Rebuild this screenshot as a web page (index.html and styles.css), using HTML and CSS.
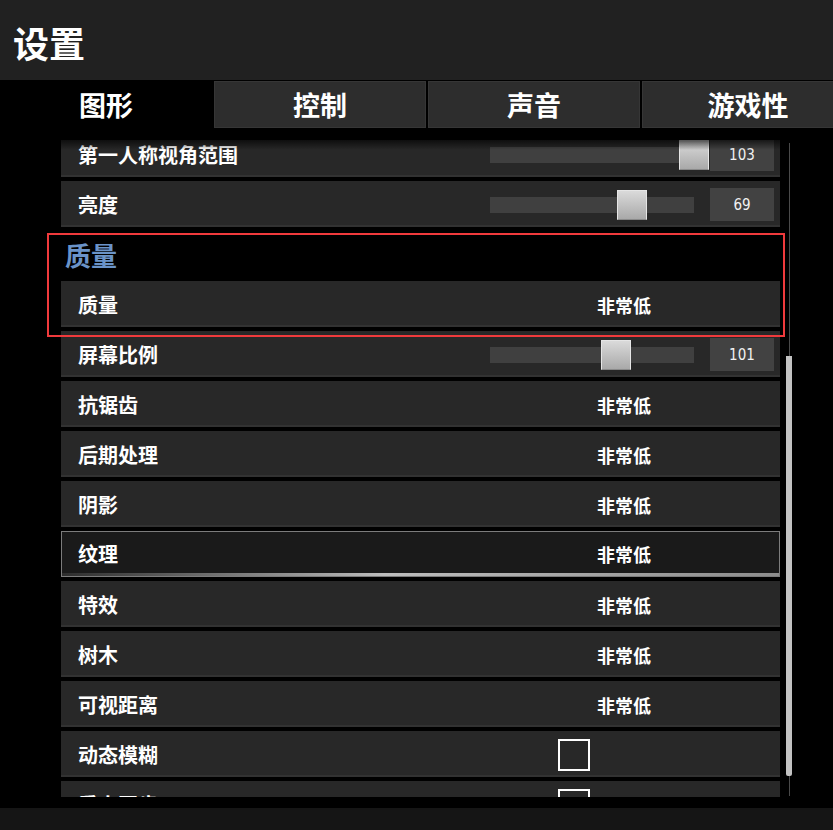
FILE: index.html
```html
<!DOCTYPE html>
<html lang="zh-CN">
<head>
<meta charset="utf-8">
<title>设置</title>
<link rel="stylesheet" href="styles.css">
</head>
<body>
<div class="app">
  <header class="header"><h1 class="title">设置</h1></header>
  <nav class="tabs">
    <div class="tab active">图形</div>
    <div class="tab">控制</div>
    <div class="tab">声音</div>
    <div class="tab">游戏性</div>
  </nav>
  <main class="main">
    <div class="list">
      <div class="list-inner">
        <div class="row">
          <span class="label">第一人称视角范围</span>
          <div class="slider"><div class="track"></div><div class="thumb" style="left:189px"></div></div>
          <div class="num">103</div>
        </div>
        <div class="row">
          <span class="label">亮度</span>
          <div class="slider"><div class="track"></div><div class="thumb" style="left:127px"></div></div>
          <div class="num">69</div>
        </div>
        <div class="section">质量</div>
        <div class="row">
          <span class="label">质量</span>
          <span class="choice">非常低</span>
        </div>
        <div class="row">
          <span class="label">屏幕比例</span>
          <div class="slider"><div class="track"></div><div class="thumb" style="left:111px"></div></div>
          <div class="num">101</div>
        </div>
        <div class="row"><span class="label">抗锯齿</span><span class="choice">非常低</span></div>
        <div class="row"><span class="label">后期处理</span><span class="choice">非常低</span></div>
        <div class="row"><span class="label">阴影</span><span class="choice">非常低</span></div>
        <div class="row selected"><span class="label">纹理</span><span class="choice">非常低</span></div>
        <div class="row"><span class="label">特效</span><span class="choice">非常低</span></div>
        <div class="row"><span class="label">树木</span><span class="choice">非常低</span></div>
        <div class="row"><span class="label">可视距离</span><span class="choice">非常低</span></div>
        <div class="row"><span class="label">动态模糊</span><span class="check"></span></div>
        <div class="row"><span class="label">垂直同步</span><span class="check"></span></div>
      </div>
    </div>
    <div class="scrollbar"><div class="scroll-thumb"></div></div>
    <div class="highlight"></div>
  </main>
  <footer class="footer"></footer>
</div>
</body>
</html>
```

FILE: styles.css
```css
* { box-sizing: border-box; }
html, body { margin: 0; padding: 0; background: #000; }
body {
  width: 833px;
  height: 830px;
  overflow: hidden;
  font-family: "Noto Sans CJK SC", "Noto Sans", sans-serif;
  color: #fff;
}
.app { display: flex; flex-direction: column; height: 830px; }

.header {
  height: 80px;
  background: #212121;
  display: flex;
  align-items: center;
  padding: 3px 0 0 13px;
}
.title {
  margin: 0;
  font-size: 36px;
  font-weight: 700;
  line-height: 1;
  color: #fff;
}

.tabs {
  height: 50px;
  display: flex;
  gap: 2px;
  padding: 1px 0 2px 0;
  background: #000;
  overflow: hidden;
}
.tab {
  flex: 0 0 212px;
  display: flex;
  align-items: center;
  justify-content: center;
  background: #2d2d2d;
  border: 1px solid #363636;
  font-size: 27px;
  font-weight: 700;
  line-height: 1;
  color: #fff;
}
.tab.active { background: #000; border-color: #000; }

.main {
  position: relative;
  height: 678px;
  display: flex;
  padding: 10px 0 0 61px;
  background: #000;
}
.list {
  position: relative;
  width: 719px;
  height: 657px;
  overflow: hidden;
}
.list::before {
  content: "";
  position: absolute;
  left: 0; right: 0; top: 0;
  height: 10px;
  background: linear-gradient(rgba(0,0,0,0.65), rgba(0,0,0,0));
  z-index: 2;
}
.list-inner {
  display: flex;
  flex-direction: column;
  gap: 4px;
  margin-top: -9px;
}
.row {
  position: relative;
  flex: 0 0 46px;
  height: 46px;
  display: flex;
  align-items: center;
  padding-top: 1px;
  background: #282828;
  box-shadow: inset 0 -2px 0 #323232;
}
.label {
  width: 429px;
  padding-left: 17px;
  font-size: 20px;
  font-weight: 700;
  line-height: 1;
  color: #fff;
}
.choice {
  margin-left: 74px;
  width: 120px;
  text-align: center;
  font-size: 18px;
  font-weight: 700;
  line-height: 1;
  color: #fff;
}
.section {
  flex: 0 0 46px;
  height: 46px;
  display: flex;
  align-items: center;
  padding: 2px 0 0 4px;
  font-size: 26px;
  font-weight: 700;
  line-height: 1;
  color: #6a93c8;
}
.slider {
  position: relative;
  width: 220px;
  height: 30px;
  display: flex;
  align-items: center;
}
.track {
  width: 204px;
  height: 16px;
  background: #404040;
}
.thumb {
  position: absolute;
  top: 0;
  width: 30px;
  height: 30px;
  border: 1px solid #e6e6e6;
  border-bottom-color: #8a8a8a;
  background: linear-gradient(#dadada, #a9a9a9);
}
.num {
  width: 64px;
  height: 33px;
  display: flex;
  align-items: center;
  justify-content: center;
  background: #424242;
  font-family: "Liberation Sans Narrow", "DejaVu Sans Condensed", "Liberation Sans", sans-serif;
  font-stretch: condensed;
  font-size: 15px;
  color: #f2f2f2;
}
.check {
  margin-left: 68px;
  width: 32px;
  height: 32px;
  border: 2px solid #fff;
}
.row.selected {
  background: #1a1a1a;
  border: 1px solid #7c7c7c;
  box-shadow: none;
  padding-top: 0;
}
.row.selected .label { padding-left: 16px; }
.row.selected .choice { margin-left: 73px; }
.row.selected::after {
  content: "";
  position: absolute;
  left: 0; right: 0; bottom: 0;
  height: 3px;
  background: linear-gradient(90deg, rgba(120,120,120,0.2), #bdbdbd 45%, #8c8c8c 100%);
}

.scrollbar {
  position: relative;
  margin: 3px 0 0 6px;
  width: 6px;
  height: 653px;
  display: flex;
  justify-content: center;
}
.scrollbar::before {
  content: "";
  width: 1px;
  height: 100%;
  background: #4a4a4a;
}
.scroll-thumb {
  position: absolute;
  left: 0;
  top: 213px;
  width: 6px;
  height: 420px;
  background: #c2c2c2;
  border-radius: 0 0 2px 2px;
}

.highlight {
  position: absolute;
  left: 47px;
  top: 103px;
  width: 738px;
  height: 104px;
  border: 2px solid #f03a3c;
  pointer-events: none;
  z-index: 3;
}

.footer {
  height: 22px;
  background: #151515;
}
```
